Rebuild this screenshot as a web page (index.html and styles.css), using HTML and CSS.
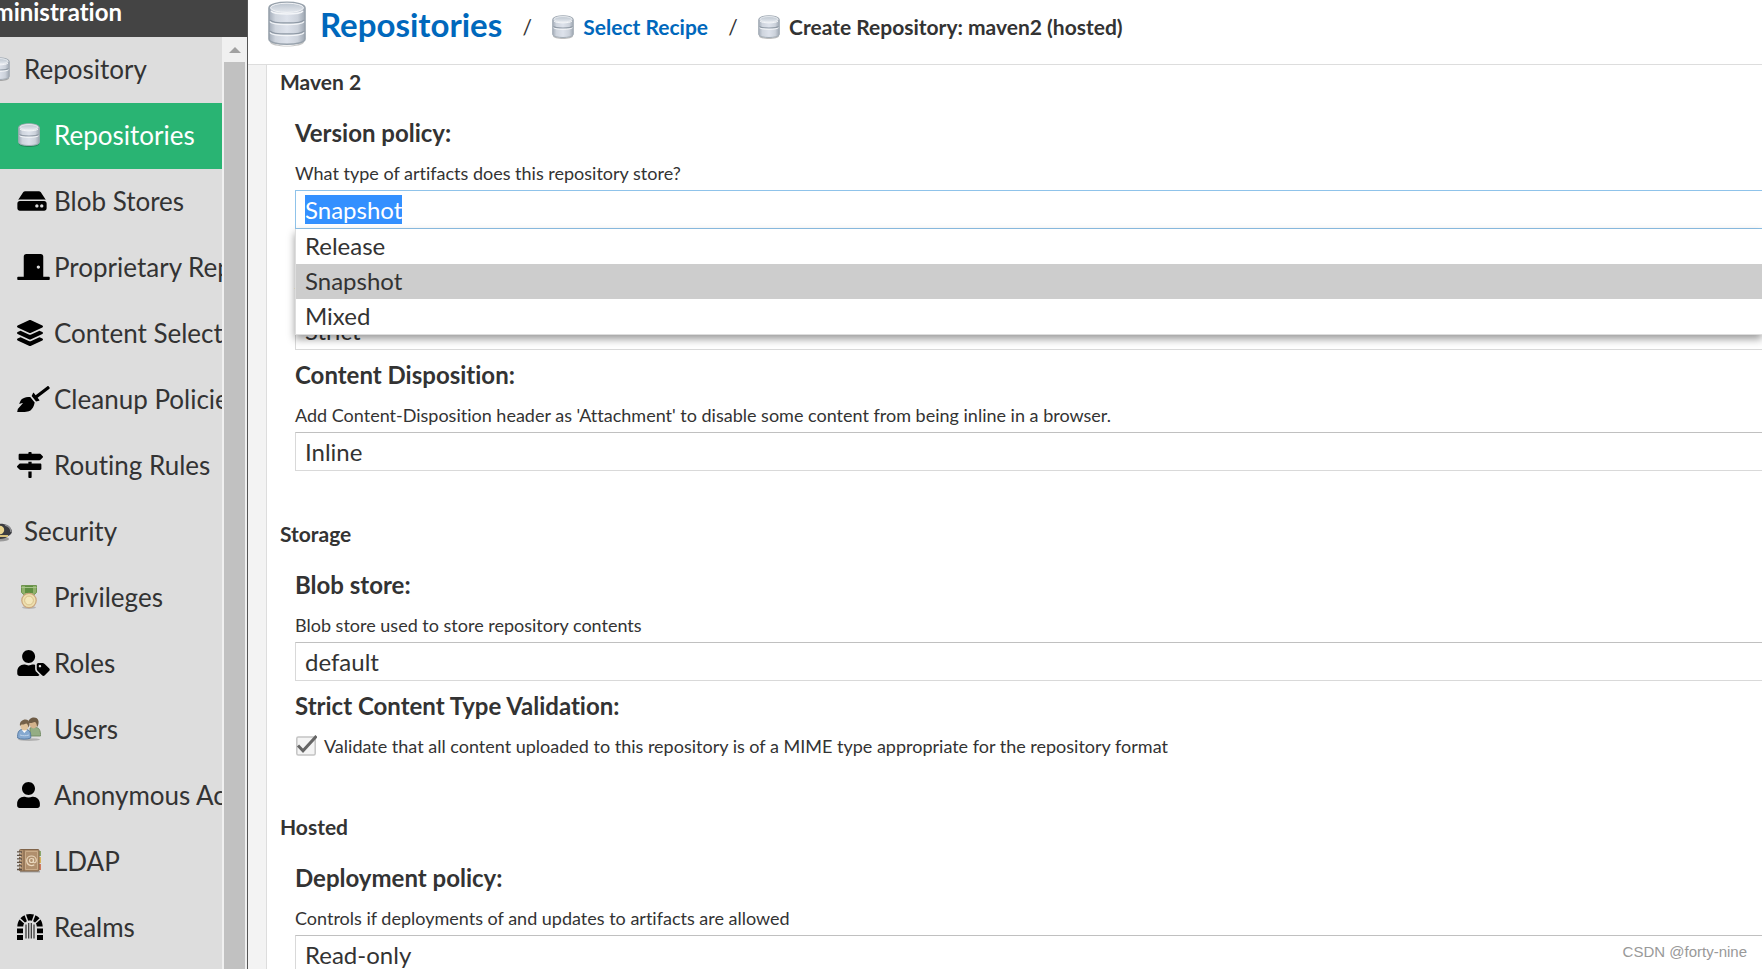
FILE: index.html
```
<!DOCTYPE html>
<html lang="en">
<head>
<meta charset="utf-8">
<title>Create Repository: maven2 (hosted)</title>
<link rel="stylesheet" href="styles.css">
</head>
<body>
<svg class="defs" aria-hidden="true">
  <defs>
    <linearGradient id="steel" x1="0" x2="1" y1="0" y2="0">
      <stop offset="0" stop-color="#a4adb9"/><stop offset=".18" stop-color="#cfd5de"/><stop offset=".5" stop-color="#dde2eb"/><stop offset=".8" stop-color="#ccd2db"/><stop offset="1" stop-color="#9ea7b2"/>
    </linearGradient>
    <linearGradient id="lid" x1="0" x2="0" y1="0" y2="1">
      <stop offset="0" stop-color="#bcc5cf"/><stop offset="1" stop-color="#e4e8ee"/>
    </linearGradient>
    <symbol id="db-large" viewBox="0 0 38 46">
      <path d="M2 38c0 9 34 9 34 0v3c0 6-34 6-34 0z" fill="#000" opacity=".22"/>
      <path d="M1 7c0-7.500 36-7.500 36 0v31c0 7-36 7-36 0z" fill="url(#steel)" stroke="#98a2ac" stroke-width="1.600"/>
      <ellipse cx="19" cy="6.800" rx="16.500" ry="4.600" fill="url(#lid)" stroke="#f1f3f6"/>
      <path d="M2 19c2 4 32 4 34 0M2 30c2 4 32 4 34 0" fill="none" stroke="#8f99a5" stroke-width="1.600"/>
      <path d="M2 20.500c2 4 32 4 34 0M2 31.500c2 4 32 4 34 0M3 10c3 4 29 4 32 0" fill="none" stroke="#f3f5f8" stroke-width="1.300"/>
    </symbol>
    <symbol id="db-small" viewBox="0 0 22 24">
      <path d="M1 19c0 5 20 5 20 0v2c0 4-20 4-20 0z" fill="#000" opacity=".25"/>
      <path d="M.7 4.500c0-5 20.600-5 20.600 0v15c0 4-20.600 4-20.600 0z" fill="url(#steel)" stroke="#a3acb5"/>
      <ellipse cx="11" cy="4.300" rx="9" ry="2.700" fill="url(#lid)" stroke="#eef0f4" stroke-width=".8"/>
      <path d="M1.500 11.500c2 2 17 2 19 0" fill="none" stroke="#929ca7" stroke-width="1.200"/>
      <path d="M1.500 12.800c2 2 17 2 19 0M2 6c2 2.500 16 2.500 18 0" fill="none" stroke="#f5f7f9"/>
    </symbol>
  </defs>
</svg>

<div class="app">
  <aside class="sidebar">
    <div class="sidebar-head"><span>Administration</span></div>
    <div class="sidebar-body">
      <nav class="nav" aria-label="Administration">
        <a class="nav-item group" href="#"><span class="icon"><svg width="24" height="24"><use href="#db-small"/></svg></span><span>Repository</span></a>
        <a class="nav-item active" href="#" aria-current="page"><span class="icon"><svg width="24" height="24"><use href="#db-small"/></svg></span><span>Repositories</span></a>
        <a class="nav-item" href="#"><span class="icon"><svg width="30" height="26" viewBox="0 0 576 512"><path d="M576 304v96c0 26.510-21.490 48-48 48H48c-26.510 0-48-21.490-48-48v-96c0-26.510 21.490-48 48-48h480c26.510 0 48 21.490 48 48zm-48-80a79.557 79.557 0 0 1 30.777 6.165L462.250 85.374A48.003 48.003 0 0 0 422.311 64H153.689a48 48 0 0 0-39.938 21.374L17.223 230.165A79.557 79.557 0 0 1 48 224h480zm-48 96c-17.673 0-32 14.327-32 32s14.327 32 32 32 32-14.327 32-32-14.327-32-32-32zm-96 0c-17.673 0-32 14.327-32 32s14.327 32 32 32 32-14.327 32-32-14.327-32-32-32z"/></svg></span><span>Blob Stores</span></a>
        <a class="nav-item" href="#"><span class="icon"><svg width="33" height="26" viewBox="0 0 640 512"><path d="M624 448H512V50.800C512 22.780 490.470 0 464 0H175.990c-26.470 0-48 22.780-48 50.800V448H16c-8.840 0-16 7.160-16 16v32c0 8.840 7.160 16 16 16h608c8.840 0 16-7.160 16-16v-32c0-8.840-7.160-16-16-16zM415.990 288c-17.670 0-32-14.330-32-32s14.330-32 32-32 32 14.330 32 32c.01 17.670-14.320 32-32 32z"/></svg></span><span>Proprietary Repositories</span></a>
        <a class="nav-item" href="#"><span class="icon"><svg width="26" height="26" viewBox="0 0 512 512"><path d="M12.410 148.020l232.940 105.670c6.800 3.090 14.490 3.090 21.290 0l232.940-105.670c16.550-7.510 16.550-32.520 0-40.030L266.650 2.310a25.607 25.607 0 0 0-21.290 0L12.410 107.980c-16.550 7.510-16.550 32.530 0 40.040zm487.180 88.280l-58.090-26.330-161.640 73.270c-7.560 3.430-15.590 5.170-23.860 5.170s-16.290-1.740-23.860-5.170L70.510 209.970l-58.100 26.330c-16.550 7.500-16.550 32.500 0 40l232.940 105.590c6.800 3.080 14.490 3.080 21.290 0L499.590 276.300c16.550-7.500 16.550-32.500 0-40zm0 127.800l-57.870-26.230-161.860 73.370c-7.560 3.430-15.590 5.170-23.860 5.170s-16.290-1.740-23.860-5.170L70.290 337.870 12.410 364.100c-16.550 7.500-16.550 32.500 0 40l232.940 105.590c6.800 3.080 14.490 3.080 21.290 0L499.590 404.100c16.550-7.500 16.550-32.500 0-40z"/></svg></span><span>Content Selectors</span></a>
        <a class="nav-item" href="#"><span class="icon"><svg width="33" height="26" viewBox="0 0 640 512"><path d="M256.470 216.770l86.730 109.180s-16.600 102.360-76.570 150.120C206.660 523.850 0 510.190 0 510.190s3.800-23.140 11-55.430l94.620-112.170c3.970-4.700-.87-11.620-6.650-9.500l-60.400 22.090c14.440-41.660 32.720-80.040 54.600-97.470 59.970-47.760 163.300-40.940 163.300-40.940zM636.530 31.030l-19.860-25c-5.490-6.900-15.520-8.050-22.410-2.560l-232.480 177.800-34.140-42.970c-5.090-6.410-15.140-5.210-18.590 2.210l-25.330 54.550 86.730 109.180 58.800-12.450c8-1.690 11.420-11.200 6.340-17.600l-34.090-42.920 232.480-177.800c6.890-5.480 8.040-15.530 2.550-22.440z"/></svg></span><span>Cleanup Policies</span></a>
        <a class="nav-item" href="#"><span class="icon"><svg width="26" height="26" viewBox="0 0 512 512"><path d="M507.310 84.690L464 41.370c-6-6-14.140-9.370-22.630-9.370H288V16c0-8.840-7.160-16-16-16h-32c-8.840 0-16 7.160-16 16v16H56c-13.250 0-24 10.750-24 24v80c0 13.250 10.750 24 24 24h385.370c8.490 0 16.620-3.370 22.630-9.370l43.310-43.310c6.250-6.260 6.250-16.380 0-22.630zM224 496c0 8.840 7.160 16 16 16h32c8.840 0 16-7.160 16-16V384h-64v112zm232-272H288v-32h-64v32H70.630c-8.490 0-16.620 3.370-22.630 9.370L4.690 276.690c-6.250 6.250-6.250 16.380 0 22.630L48 342.630c6 6 14.140 9.370 22.630 9.370H456c13.250 0 24-10.750 24-24v-80c0-13.250-10.750-24-24-24z"/></svg></span><span>Routing Rules</span></a>
        <a class="nav-item group" href="#"><span class="icon"><svg width="25" height="24" viewBox="0 0 25 24">
          <ellipse cx="13" cy="20" rx="9" ry="2.500" fill="#000" opacity=".3"/>
          <path d="M2 12C4 3 22 2 25 12c0 3-2 4-4 5-3 4-13 4-16 0-2-1-3-2-3-5z" fill="#3b3c40"/>
          <path d="M18 6c4 1 6 4 6 7" fill="none" stroke="#8c8d90" stroke-width="1.500"/>
          <path d="M5 16h16v2H5z" fill="#d9c27c"/><circle cx="13" cy="11" r="4.200" fill="#e9d48e"/></svg></span><span>Security</span></a>
        <a class="nav-item" href="#"><span class="icon"><svg width="24" height="24" viewBox="0 0 24 24">
          <path d="M4.500.5h15v7l-4 3.500h-7l-4-3.500z" fill="#8fb06a" stroke="#6f9550"/><path d="M8 1h8v7H8z" fill="#5f8f41"/><path d="M4.500 2.500h15" stroke="#a9c58b"/>
          <ellipse cx="12" cy="22.500" rx="7" ry="1.500" fill="#000" opacity=".18"/>
          <circle cx="12" cy="15.500" r="7.200" fill="#eedfae" stroke="#c9a57c" stroke-width="1.200"/><circle cx="12" cy="15.500" r="4.400" fill="#f3e7bb" stroke="#d8c18d"/></svg></span><span>Privileges</span></a>
        <a class="nav-item" href="#"><span class="icon"><svg width="33" height="26" viewBox="0 0 640 512"><path d="M630.600 364.900l-90.300-90.200c-12-12-28.300-18.700-45.300-18.700h-79.300c-17.700 0-32 14.300-32 32v79.200c0 17 6.700 33.200 18.700 45.200l90.300 90.200c12.500 12.500 32.800 12.500 45.300 0l92.500-92.500c12.600-12.500 12.600-32.700.1-45.200zm-182.800-21c-13.300 0-24-10.700-24-24s10.700-24 24-24 24 10.700 24 24c0 13.200-10.700 24-24 24zm-223.800-88c70.700 0 128-57.300 128-128C352 57.300 294.700 0 224 0S96 57.300 96 128c0 70.600 57.300 127.900 128 127.900zm127.800 111.200V294c-12.200-3.600-24.900-6.200-38.200-6.200h-16.700c-22.200 10.200-46.900 16-72.900 16s-50.600-5.800-72.900-16h-16.700C60.200 287.900 0 348.100 0 422.300v41.600c0 26.500 21.500 48 48 48h352c15.500 0 29.100-7.500 37.900-18.900l-58-58c-18.100-18.100-28.100-42.200-28.100-67.900z"/></svg></span><span>Roles</span></a>
        <a class="nav-item" href="#"><span class="icon"><svg width="24" height="24" viewBox="0 0 24 24">
          <path d="M13 11c2-1 8-1 9 1 1.500 2 1.700 5 1.500 7H13z" fill="#94ad84" stroke="#6d875e" stroke-width=".8"/>
          <ellipse cx="16.500" cy="6.500" rx="4" ry="5" fill="#d3b28c"/><path d="M11.500 6c-1-6 9-8 10-2 .3 3-.5 5-1.500 6 0-3-1-5-2.500-5-2 1-4 1-6 1z" fill="#6e5b45"/>
          <ellipse cx="12" cy="22.600" rx="11" ry="1.400" fill="#000" opacity=".2"/>
          <path d="M.7 21c-.5-5 1-8 4-8.500h5c3 .5 4.500 3.500 4 8.500-3 1.500-10 1.500-13 0z" fill="#86a9d0" stroke="#52769f" stroke-width=".9"/><path d="M5 13l2.300 3L10 13z" fill="#fff"/><path d="M3 18c3 1 6 1 9 0" stroke="#bfd3ea" fill="none"/>
          <ellipse cx="7.500" cy="9" rx="3.900" ry="4.600" fill="#e0c39d"/><path d="M3 9C1.500 2 12.500 0 12.500 6.500c0 2-.5 3-1.200 4 0-2-.8-3.500-2-4-2 1-3.300 1-4.800 1z" fill="#756149"/></svg></span><span>Users</span></a>
        <a class="nav-item" href="#"><span class="icon"><svg width="23" height="26" viewBox="0 0 448 512"><path d="M224 256c70.700 0 128-57.300 128-128S294.700 0 224 0 96 57.300 96 128s57.300 128 128 128zm89.600 32h-16.700c-22.200 10.200-46.900 16-72.900 16s-50.600-5.800-72.900-16h-16.700C60.200 288 0 348.200 0 422.400V464c0 26.500 21.500 48 48 48h352c26.500 0 48-21.500 48-48v-41.600c0-74.200-60.200-134.400-134.400-134.400z"/></svg></span><span>Anonymous Access</span></a>
        <a class="nav-item" href="#"><span class="icon"><svg width="24" height="24" viewBox="0 0 24 24">
          <path d="M3 22h20v1.500H3z" fill="#000" opacity=".25"/><path d="M21 2h3v5h-3z" fill="#8aa66c"/><path d="M21 8h3v6h-3z" fill="#d9b45c"/><path d="M21 15h3v6h-3z" fill="#cf7b5e"/>
          <rect x="2.500" y=".5" width="19.500" height="21.500" rx="1" fill="#b08f6d" stroke="#80644a"/><path d="M7 1v21" stroke="#80644a"/><path d="M8.500 2.500h12v18h-12z" fill="none" stroke="#c9ab88"/>
          <path d="M0 3h5M0 6.500h5M0 10h5M0 13.500h5M0 17h5M0 20.500h5" stroke="#5e5146" stroke-width="1.300"/><path d="M0 4h4M0 7.500h4M0 11h4M0 14.500h4M0 18h4" stroke="#e6e1da" stroke-width=".8"/>
          <circle cx="14.500" cy="11.500" r="2" fill="none" stroke="#ead9bf" stroke-width="1.200"/><path d="M16.500 9.500v3.300c0 1.500 2.800 1.400 2.800-1.300 0-6-9.600-6-9.600 0 0 5 4.800 6 7.600 4.200" fill="none" stroke="#ead9bf" stroke-width="1.200"/></svg></span><span>LDAP</span></a>
        <a class="nav-item" href="#"><span class="icon"><svg width="26" height="26" viewBox="0 0 26 26">
          <path d="M9 .6c2.600-.8 5.400-.8 8 0l-2.200 6.200c-1.200-.3-2.400-.3-3.600 0z"/>
          <path d="M7.600 1.200l2.300 6-1.900 1.300-4.600-4.200c1.200-1.400 2.600-2.400 4.200-3.100zM18.400 1.200l-2.300 6L18 8.500l4.600-4.200c-1.200-1.400-2.600-2.400-4.200-3.100z"/>
          <path d="M2.500 5.600l4.600 4c-.5.900-.8 1.800-.9 2.800H.3c.1-2.500.9-4.800 2.200-6.800zM23.500 5.600l-4.600 4c.5.900.8 1.800.9 2.800h5.900c-.1-2.500-.9-4.800-2.200-6.800z"/>
          <path d="M0 14.500h6v4.700H0zM0 21h6v5H0zM20 14.500h6v4.700h-6zM20 21h6v5h-6z"/>
          <path d="M9 10.500V24.500M11.700 9v15.500M14.300 9v15.500M17 10.500V24.500" stroke="#333" stroke-width="1.200"/></svg></span><span>Realms</span></a>
      </nav>
      <div class="scrollbar" aria-hidden="true">
        <svg class="scroll-up" width="12" height="6" viewBox="0 0 12 6"><path d="M6 0l6 6H0z"/></svg>
        <div class="scroll-thumb"></div>
      </div>
    </div>
  </aside>

  <main class="main">
    <header class="crumbs">
      <a class="crumb crumb-main" href="#"><svg width="38" height="46"><use href="#db-large"/></svg><span>Repositories</span></a>
      <span class="slash">/</span>
      <a class="crumb" href="#"><svg width="22" height="24"><use href="#db-small"/></svg><span>Select Recipe</span></a>
      <span class="slash">/</span>
      <span class="crumb current"><svg width="22" height="24"><use href="#db-small"/></svg><span>Create Repository: maven2 (hosted)</span></span>
    </header>

    <form class="form">
      <section class="section">
        <h2 class="section-title">Maven 2</h2>
        <div class="field combo">
          <label class="label" for="version">Version policy:</label>
          <p class="help">What type of artifacts does this repository store?</p>
          <input class="control" id="version" type="text" value="Snapshot" role="combobox" aria-expanded="true" aria-controls="version-list" autocomplete="off">
          <ul class="menu" id="version-list" role="listbox">
            <li class="option" role="option">Release</li>
            <li class="option selected" role="option" aria-selected="true">Snapshot</li>
            <li class="option" role="option">Mixed</li>
          </ul>
        </div>
        <div class="field">
          <label class="label" for="layout">Layout policy:</label>
          <p class="help">Validate that all paths are maven artifact or metadata paths</p>
          <select class="control" id="layout"><option>Strict</option><option>Permissive</option></select>
        </div>
        <div class="field">
          <label class="label" for="disposition">Content Disposition:</label>
          <p class="help">Add Content-Disposition header as 'Attachment' to disable some content from being inline in a browser.</p>
          <select class="control" id="disposition"><option>Inline</option><option>Attachment</option></select>
        </div>
      </section>

      <section class="section">
        <h2 class="section-title">Storage</h2>
        <div class="field">
          <label class="label" for="blob">Blob store:</label>
          <p class="help">Blob store used to store repository contents</p>
          <select class="control" id="blob"><option>default</option></select>
        </div>
        <div class="field">
          <div class="label">Strict Content Type Validation:</div>
          <label class="check"><input class="check-box" type="checkbox" checked><span>Validate that all content uploaded to this repository is of a MIME type appropriate for the repository format</span></label>
        </div>
      </section>

      <section class="section">
        <h2 class="section-title">Hosted</h2>
        <div class="field">
          <label class="label" for="deploy">Deployment policy:</label>
          <p class="help">Controls if deployments of and updates to artifacts are allowed</p>
          <select class="control" id="deploy"><option>Read-only</option><option>Allow redeploy</option><option>Disable redeploy</option></select>
        </div>
      </section>
    </form>
  </main>
</div>
<div class="watermark">CSDN @forty-nine</div>
<script src="script.js"></script>
</body>
</html>
```
FILE: styles.css
```
* { box-sizing: border-box; }
body {
  margin: 0;
  background: #fff;
  color: #333;
  font-family: Lato, "Open Sans", sans-serif;
  font-size: 18px;
  font-variant-ligatures: none;
  line-height: 24px;
  overflow: hidden;
}
a { color: inherit; text-decoration: none; }
.defs { position: absolute; width: 0; height: 0; }
.app { display: flex; height: 100vh; overflow: hidden; }

/* Sidebar */
.sidebar {
  display: flex;
  flex-direction: column;
  flex: none;
  width: 248px;
  border-right: 1px solid #555;
  background: #ddd;
}
.sidebar-head {
  display: flex;
  flex: none;
  height: 37px;
  background: #444;
}
.sidebar-head span {
  display: flex;
  justify-content: flex-end;
  width: 122px;
  color: #fff;
  font-size: 24px;
  font-weight: 700;
}
.sidebar-body { display: flex; flex: 1; min-height: 0; }
.nav { flex: 1; min-width: 0; overflow: hidden; }
.nav-item {
  display: flex;
  align-items: center;
  height: 66px;
  padding: 0 0 2px 17px;
  font-size: 26px;
  white-space: nowrap;
}
.nav-item.group { margin-left: -30px; }
.nav-item.active { background: #29b473; color: #fff; }
.icon { display: flex; flex: none; width: 37px; }
.scrollbar {
  display: flex;
  flex-direction: column;
  align-items: center;
  flex: none;
  width: 25px;
  padding: 10px 2px 0;
  background: #f0f0f0;
}
.scroll-up { flex: none; fill: #a0a0a0; margin-bottom: 9px; }
.scroll-thumb { flex: 1; width: 21px; background: #c1c1c1; }

/* Breadcrumbs */
.main { display: flex; flex-direction: column; flex: 1; min-width: 0; }
.crumbs {
  display: flex;
  align-items: center;
  flex: none;
  height: 65px;
  padding: 0 20px 10px;
  border-bottom: 1px solid #ddd;
  white-space: nowrap;
}
.crumb {
  display: flex;
  align-items: center;
  gap: 9px;
  color: #0068bc;
  font-size: 21px;
  font-weight: 700;
}
.crumb-main { gap: 14px; padding-bottom: 6px; font-size: 33px; }
.crumb.current { color: #333; }
.slash { width: 50px; text-align: center; font-size: 21px; }

/* Form */
.form {
  flex: 1;
  min-height: 0;
  overflow: hidden;
  margin-left: 18px;
  padding: 5px 0 0 13px;
  border-left: 1px solid #ddd;
  box-shadow: -18px 0 #f3f3f3;
}
.section { margin-bottom: 51px; }
.section-title {
  margin: 0 0 14px;
  font-size: 21px;
  line-height: 24px;
  font-weight: 700;
}
.field { padding: 10px 0 0 15px; }
.label {
  display: block;
  margin-bottom: 13px;
  font-size: 24px;
  line-height: 30px;
  font-weight: 700;
}
.help { margin: 0 0 5px; }
.control {
  display: block;
  width: 100%;
  height: 39px;
  margin: 0;
  padding: 0 9px;
  appearance: none;
  border: 1px solid #d9d9d9;
  border-top-color: #c0c0c0;
  border-right: 0;
  border-radius: 0;
  outline: 0;
  background: #fff;
  color: #333;
  font: inherit;
  font-size: 24px;
  line-height: 29px;
}
.combo { position: relative; }
.combo .control { border-color: #8fc3ea; }
.control::selection { background: #3390ff; color: #fff; }
.menu {
  position: absolute;
  z-index: 1;
  top: 100%;
  left: 15px;
  right: 0;
  margin: 0;
  padding: 0;
  list-style: none;
  border: 1px solid #ddd;
  border-width: 0 0 1px 1px;
  background: #fff;
  box-shadow: 0 4px 8px rgba(0, 0, 0, .4);
}
.option {
  height: 35px;
  padding-left: 9px;
  font-size: 24px;
  line-height: 34px;
}
.option.selected { background: #cdcdcd; }
.check {
  display: flex;
  align-items: center;
  gap: 7px;
  padding-bottom: 6px;
}
.check-box {
  width: 21px;
  height: 21px;
  margin: 0 0 2px 1px;
  appearance: none;
  background: url('data:image/svg+xml,<svg xmlns="http://www.w3.org/2000/svg" viewBox="0 0 21 21"><rect x=".8" y="2" width="18.400" height="18" rx="1.500" fill="%23f4f4f4" stroke="%23c4c4c4" stroke-width="1.500"/><path d="M2 10.500l5 5.200L20.500 1" fill="none" stroke="%23666" stroke-width="3"/></svg>') center / 100% no-repeat;
}

.watermark {
  position: absolute;
  right: 15px;
  bottom: 5px;
  color: #999;
  font-family: "Liberation Sans", Arial, sans-serif;
  font-size: 15px;
  line-height: 24px;
}
```
FILE: script.js
```
const version = document.getElementById('version');
version.focus();
version.select();
```
